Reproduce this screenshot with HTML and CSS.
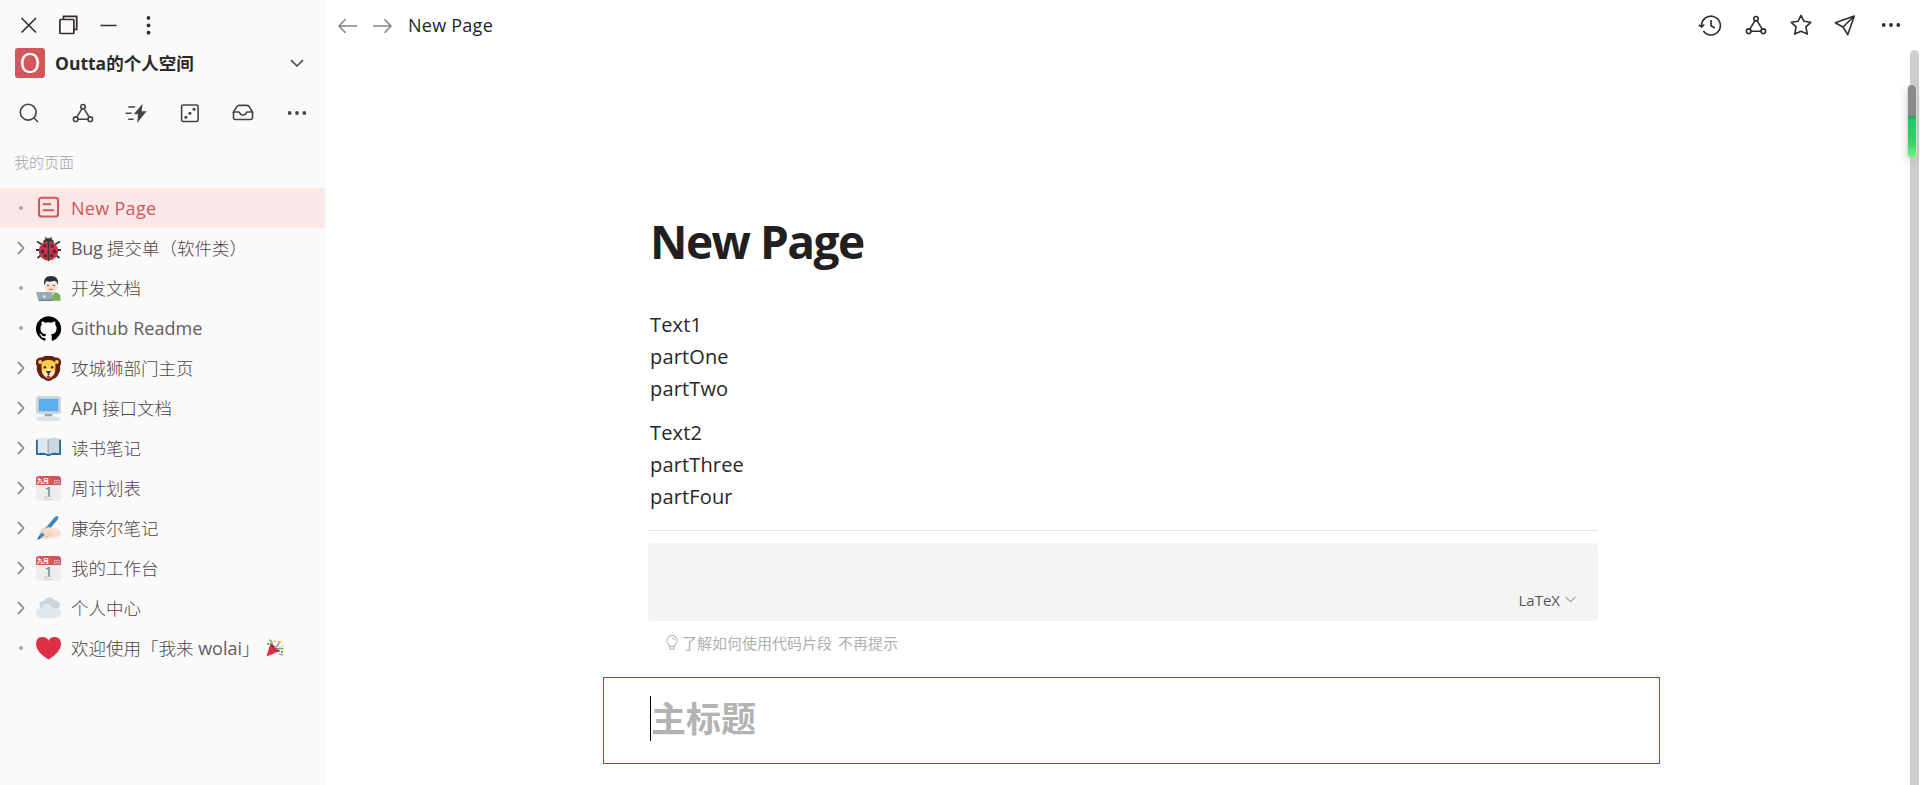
FILE: index.html
```html
<!DOCTYPE html>
<html lang="zh-CN">
<head>
<meta charset="utf-8">
<title>New Page</title>
<link rel="stylesheet" href="styles.css">
</head>
<body>
<svg class="defs" width="0" height="0">
  <defs>
    <symbol id="graph" viewBox="0 0 22 22"><g fill="none" stroke="currentColor" stroke-width="1.6"><circle cx="11" cy="4.7" r="2.2"/><circle cx="3.7" cy="17.2" r="2.3"/><circle cx="18.3" cy="17.2" r="2.3"/><path d="M10 6.7 4.8 15.2M12 6.7l5.2 8.5M6 17.2h10"/></g></symbol>
    <symbol id="more" viewBox="0 0 22 22"><g fill="currentColor"><circle cx="3.7" cy="11" r="1.9"/><circle cx="11" cy="11" r="1.9"/><circle cx="18.3" cy="11" r="1.9"/></g></symbol>
    <symbol id="caret" viewBox="0 0 8 14"><path d="M1 1 6.600 7 1 13" fill="none" stroke="currentColor" stroke-width="1.7"/></symbol>
    <symbol id="calendar" viewBox="0 0 25 25"><rect width="25" height="25" rx="3" fill="#ededed"/><path d="M0 9V3a3 3 0 0 1 3-3h19a3 3 0 0 1 3 3v6z" fill="#d1575b"/><g fill="#f6d5d6"><path d="M18 4h1.3v1.2H18zM20.3 4h1.3v1.2h-1.3zM22.6 4h1.2v1.2h-1.2zM18 6.3h1.3v1.2H18zM20.3 6.3h1.3v1.2h-1.3zM22.6 6.3h1.2v1.2h-1.2z"/></g><text x="1" y="7.400" class="cal-month">九月</text><text x="8.200" y="20.600" class="cal-day">1</text><text x="7.8" y="23.800" class="cal-week">周三</text></symbol>
  </defs>
</svg>
<div class="app">
  <aside class="sidebar">
    <div class="window-bar">
      <svg width="19" height="20" viewBox="0 0 19 20"><path d="m2.5 3 14.500 14.500m0-14.500L2.500 17.500" fill="none" stroke="currentColor" stroke-width="1.6"/></svg>
      <svg width="19" height="20" viewBox="0 0 19 20"><g fill="none" stroke="currentColor" stroke-width="1.7"><rect x=".9" y="4.500" width="14" height="14" rx=".8"/><path d="M4.500 4.500V1.300h13.200v13.200h-3"/></g></svg>
      <svg width="17" height="20" viewBox="0 0 17 20"><path d="M.5 10.500h16" stroke="currentColor" stroke-width="1.500"/></svg>
      <svg width="5" height="20" viewBox="0 0 5 20"><g fill="currentColor"><circle cx="2.500" cy="2.900" r="1.900"/><circle cx="2.500" cy="10.400" r="1.900"/><circle cx="2.500" cy="17.700" r="1.900"/></g></svg>
    </div>
    <div class="workspace">
      <span class="avatar">O</span>
      <span class="workspace-name">Outta的个人空间</span>
      <svg class="workspace-arrow" width="14" height="9" viewBox="0 0 14 9"><path d="m1 1.200 6 5.800 6-5.800" fill="none" stroke="currentColor" stroke-width="1.600"/></svg>
    </div>
    <nav class="tools">
      <svg viewBox="0 0 22 22"><g fill="none" stroke="currentColor" stroke-width="1.600"><circle cx="10.200" cy="10.200" r="7.900"/><path d="m15.800 15.800 4.200 4.200"/></g></svg>
      <svg viewBox="0 0 22 22"><use href="#graph"/></svg>
      <svg viewBox="0 0 22 22"><path d="M3.200 5h7M.600 11.200h6M3.200 17.200h5.400" stroke="currentColor" stroke-width="1.500"/><path d="M17.500 1.700 8.800 12.200h4.200l-.800 8.800 9.300-11.700h-4.800z" fill="currentColor"/></svg>
      <svg viewBox="0 0 22 22"><rect x="2.600" y="3" width="16.500" height="16.500" rx="1.600" fill="none" stroke="currentColor" stroke-width="1.600"/><g fill="currentColor"><circle cx="15" cy="7.200" r="1.500"/><circle cx="10.900" cy="11.200" r="1.500"/><circle cx="6.900" cy="15.300" r="1.500"/></g></svg>
      <svg viewBox="0 0 22 22"><path d="M1.500 10v5.500a2 2 0 0 0 2 2h15a2 2 0 0 0 2-2V10M1.500 10l3.300-5.400Q5.500 3.400 7 3.400h8q1.500 0 2.200 1.200L20.500 10h-5q-.800 0-1.100.800-.700 2.200-3.400 2.200t-3.400-2.200q-.300-.8-1.100-.8z" fill="none" stroke="currentColor" stroke-width="1.600"/></svg>
      <svg viewBox="0 0 22 22"><use href="#more"/></svg>
    </nav>
    <div class="section-label">我的页面</div>
    <ul class="pages">
      <li class="page active"><span class="lead"><i class="dot"></i></span>
        <svg class="icon" viewBox="0 0 25 25"><g fill="none" stroke="currentColor" stroke-width="2.100"><rect x="3" y="1.800" width="19" height="18.700" rx="2.500"/><path d="M6.800 8.200h8.200M6.800 14.200h11.400" stroke-width="1.900"/></g></svg><span class="name"><span class="lat first">New Page</span></span></li>
      <li class="page"><span class="lead"><svg width="8" height="14"><use href="#caret"/></svg></span>
        <svg class="icon" viewBox="0 0 25 25"><path d="m1 5.500 5 3M24 5.500l-5 3M0 14h25M1.500 22l5-4M23.500 22l-5-4" stroke="#31373d" stroke-width="1.800"/><path d="M7 7q0-3 2.500-4L9 .500l2.200 1.800h2.600L16 .500 15.500 3Q18 4 18 7z" fill="#31373d"/><ellipse cx="12.500" cy="14.800" rx="9.700" ry="9.700" fill="#d92b45"/><path d="M12.500 5v20" stroke="#31373d" stroke-width="1.500"/><g fill="#31373d"><circle cx="8.800" cy="10" r="1.700"/><circle cx="16.200" cy="10" r="1.700"/><circle cx="6.500" cy="15.500" r="2"/><circle cx="18.500" cy="15.500" r="2"/><circle cx="9.300" cy="19.800" r="1.700"/><circle cx="15.700" cy="19.800" r="1.700"/></g></svg><span class="name"><span class="lat bug">Bug </span>提交单（软件类）</span></li>
      <li class="page"><span class="lead"><i class="dot"></i></span>
        <svg class="icon" viewBox="0 0 25 25"><path d="M9 24v-4q0-3.500 4-3.500h6q5.500 0 5.500 5.500v3z" fill="#77b255"/><path d="M12 14h6v4.500q-3 2-6 0z" fill="#e9c5b5"/><path d="M8.500 7h13v3q-.5 6-6.500 6.500Q9 16 8.500 10z" fill="#f7dece"/><path d="M8 9Q7 0 15 0t7 9l-1.500-3-2-1.300Q13 6.500 10.500 5z" fill="#292f33"/><circle cx="12" cy="9.500" r=".8" fill="#662113"/><circle cx="18" cy="9.500" r=".8" fill="#662113"/><path d="M13 13q2 1.300 4 0" fill="none" stroke="#c1694f"/><path d="M0 16h15.500l1.700 9H2.500z" fill="#99aab5"/><path d="M3 25h14v-1.200H3z" fill="#667984"/><circle cx="8.300" cy="20.500" r="1.500" fill="#e1e8ed"/></svg><span class="name">开发文档</span></li>
      <li class="page"><span class="lead"><i class="dot"></i></span>
        <svg class="icon github" viewBox="0 0 24 24"><path fill="#000" d="M12 .3A12 12 0 0 0 8.200 23.700c.6.100.8-.3.800-.6v-2c-3.300.7-4-1.600-4-1.600-.6-1.400-1.400-1.800-1.400-1.800-1-.7.100-.7.100-.7 1.200 0 1.900 1.200 1.900 1.200 1 1.800 2.800 1.300 3.500 1 0-.8.400-1.300.7-1.600-2.700-.3-5.500-1.300-5.500-6 0-1.200.5-2.300 1.300-3.100-.2-.4-.6-1.600 0-3.200 0 0 1-.3 3.400 1.200a11.500 11.500 0 0 1 6 0c2.300-1.500 3.300-1.200 3.300-1.200.6 1.600.2 2.800.1 3.200.8.800 1.300 1.900 1.300 3.200 0 4.600-2.800 5.600-5.500 5.900.5.400.9 1 .9 2.200v3.300c0 .3.100.7.800.6A12 12 0 0 0 12 .3"/></svg><span class="name"><span class="lat readme">Github Readme</span></span></li>
      <li class="page"><span class="lead"><svg width="8" height="14"><use href="#caret"/></svg></span>
        <svg class="icon" viewBox="0 0 25 25"><path d="M12.500 0q4-.500 6.500 1.500Q24 1 25 5q.5 3-1 5 1 4-1 7-1.500 5-6 6-2 2-4.500 2T8 23q-4.500-1-6-6-2-3-1-7-1.500-2-1-5 1-4 6-3.500Q8.500-.500 12.500 0z" fill="#662113"/><circle cx="4.200" cy="6" r="2" fill="#ffcc4d"/><circle cx="20.800" cy="6" r="2" fill="#ffcc4d"/><path d="M5.500 8q1-4 7-4t7 4l-.3 7q-1 5-6.700 7-5.700-2-6.700-7z" fill="#ffcc4d"/><path d="m12.500 12 3 3 3.500-.5q0 5.500-6.500 8.500Q6 20 6 14.500l3.500.5z" fill="#ffe8b6"/><circle cx="8.900" cy="11.300" r="1.200" fill="#292f33"/><circle cx="16.100" cy="11.300" r="1.200" fill="#292f33"/><path d="M9.700 15h5.600l-2 2.500v2h-1.600v-2z" fill="#292f33"/><path d="M10.500 20h4q-.5 3-2 3t-2-3z" fill="#dd2e44"/></svg><span class="name">攻城狮部门主页</span></li>
      <li class="page"><span class="lead"><svg width="8" height="14"><use href="#caret"/></svg></span>
        <svg class="icon" viewBox="0 0 25 25"><rect width="25" height="18" rx="2.500" fill="#ccd6dd"/><rect x="2.800" y="2.800" width="19.500" height="12.500" fill="#5dadec"/><path d="M9 18h7l1 2.500H8z" fill="#9aaab4"/><rect x="0" y="20.800" width="25" height="4.200" rx="2" fill="#e1e8ed"/><path d="M2 22.200h21M3 23.800h19" stroke="#ccd6dd" stroke-width=".8" stroke-dasharray="1 1"/></svg><span class="name"><span class="lat api">API </span>接口文档</span></li>
      <li class="page"><span class="lead"><svg width="8" height="14"><use href="#caret"/></svg></span>
        <svg class="icon" viewBox="0 0 25 25"><path d="M0 4.500q0-1 1-1h23q1 0 1 1V18q0 1-1 1h-9l-1 1h-3l-1-1H1q-1 0-1-1z" fill="#226699"/><path d="M1.800 3Q8 0 12.500 3v15.500Q7 15.500 1.800 17.500z" fill="#e1e8ed"/><path d="M23.200 3Q17 0 12.500 3v15.500q5.500-3 10.700-1z" fill="#ccd6dd"/><path d="M12 3v15" stroke="#99aab5"/></svg><span class="name">读书笔记</span></li>
      <li class="page"><span class="lead"><svg width="8" height="14"><use href="#caret"/></svg></span>
        <svg class="icon" viewBox="0 0 25 25"><use href="#calendar"/></svg><span class="name">周计划表</span></li>
      <li class="page"><span class="lead"><svg width="8" height="14"><use href="#caret"/></svg></span>
        <svg class="icon" viewBox="0 0 25 25"><path d="M3 19q.500-8 7-8 4-.500 7.500 1 6 .800 7.500 4 .300 4-5 5.500l-8 1.200q-2.500 2-3.500.300L5.500 22z" fill="#f7dece"/><path d="M10 18q3-3 5 0M9 21q4-1 6-3" fill="none" stroke="#e0aa94" stroke-width=".8"/><path d="m19 .800 2.200-.8 1.300.8-.8 2.900L6 21.500l-3-1.800z" fill="#3b88c3"/><path d="m3 19.700 3 1.800-5 2.700z" fill="#226699"/><path d="M6 17.500q1-5 7-6.500l3 1.500q-1 4-6.500 5.500z" fill="#f7dece"/></svg><span class="name">康奈尔笔记</span></li>
      <li class="page"><span class="lead"><svg width="8" height="14"><use href="#caret"/></svg></span>
        <svg class="icon" viewBox="0 0 25 25"><use href="#calendar"/></svg><span class="name">我的工作台</span></li>
      <li class="page"><span class="lead"><svg width="8" height="14"><use href="#caret"/></svg></span>
        <svg class="icon" viewBox="0 0 25 25"><g fill="#ccd6dd"><circle cx="7.500" cy="9" r="4.200"/><circle cx="13.500" cy="6" r="4.800"/><circle cx="19.500" cy="9" r="4.500"/><rect x="6" y="7" width="15" height="7"/></g><g fill="#e1e8ed"><circle cx="5" cy="17" r="5"/><circle cx="11" cy="13" r="5.300"/><circle cx="20" cy="17" r="5"/><circle cx="16" cy="16" r="4.500"/><rect x="4" y="16" width="17" height="6"/></g></svg><span class="name">个人中心</span></li>
      <li class="page"><span class="lead"><i class="dot"></i></span>
        <svg class="icon" viewBox="0 0 25 25"><path d="M12.500 23.500Q0 16 0 8q0-6.700 6.500-6.900 4.500 0 6 3.600 1.500-3.600 6-3.600Q25 1.300 25 8q0 8-12.500 15.500z" fill="#dd2e44"/></svg><span class="name">欢迎使用「我来<span class="lat wolai"> wolai</span>」</span><svg class="party" viewBox="0 0 18 18"><path d="M4.500 4 .5 17.500 14 12z" fill="#dd2e44"/><path d="M4.500 4 14 12q-2 2-6-2T4.500 4z" fill="#992037"/><path d="M3 1q4 1 3 5M10 11q3-3 7.500-1" fill="none" stroke="#77b255" stroke-width="1.500"/><path d="M8 9q5-2 5-7M13 15l4 1" fill="none" stroke="#aa8dd8" stroke-width="1.600"/><g fill="#ffcc4d"><circle cx="14.500" cy="3" r="1.300"/><circle cx="9" cy="2" r="1"/><circle cx="17" cy="7" r=".9"/></g><path d="M1 4h2v2H1zM15 12h2v2h-2z" fill="#77b255"/></svg></li>
    </ul>
  </aside>
  <main class="main">
    <header class="topbar">
      <svg class="nav-arrow" width="19" height="16" viewBox="0 0 19 16"><path d="M19 8H1m6.500-6.800L1 8l6.500 6.800" fill="none" stroke="currentColor" stroke-width="1.600"/></svg>
      <svg class="nav-arrow" width="19" height="16" viewBox="0 0 19 16"><path d="M0 8h18m-6.500-6.800L18 8l-6.500 6.800" fill="none" stroke="currentColor" stroke-width="1.600"/></svg>
      <span class="crumb">New Page</span>
      <div class="actions">
        <svg viewBox="0 0 24 24"><g fill="none" stroke="currentColor" stroke-width="1.600"><path d="M3.600 13.500a9.400 9.400 0 1 1 1.700 4.500M13 7v5.800l3.800 2.200M.8 11.800l2.700 2.100 2.900-2.400"/></g></svg>
        <svg viewBox="0 0 22 22"><use href="#graph"/></svg>
        <svg viewBox="0 0 22 22"><path d="m11 1.300 3 6 6.700 1-4.800 4.600 1.400 7.200-6.300-2.800-6.300 2.800 1.400-7.200L1.300 8.300 8 7.300z" fill="none" stroke="currentColor" stroke-width="1.600" stroke-linejoin="round"/></svg>
        <svg viewBox="0 0 22 22"><path d="M20.300 2 1.300 8.800l7.700 4.200L20.300 2 13.700 20.700 9 13" fill="none" stroke="currentColor" stroke-width="1.600" stroke-linejoin="round"/></svg>
        <svg viewBox="0 0 22 22"><use href="#more"/></svg>
      </div>
    </header>
    <article class="doc">
      <h1 class="doc-title">New Page</h1>
      <div class="block"><p>Text1</p><p>partOne</p><p>partTwo</p></div>
      <div class="block"><p>Text2</p><p>partThree</p><p>partFour</p></div>
      <hr class="rule">
      <div class="code"><span class="code-lang">LaTeX</span><svg width="11" height="7" viewBox="0 0 11 7"><path d="m.6.800 4.900 4.900L10.400.800" fill="none" stroke="currentColor" stroke-width="1.200"/></svg></div>
      <div class="hint"><svg width="12" height="16" viewBox="0 0 12 16"><g fill="none" stroke="currentColor" stroke-width="1.100"><path d="M3.800 11.500Q3.700 10 2.300 8.800A5 5 0 1 1 9.700 8.800Q8.300 10 8.200 11.500zM3.900 11.500v2.700h4.200v-2.700M6 3q2 0 2.400 2"/></g></svg><span>了解如何使用代码片段</span><span class="dismiss">不再提示</span></div>
      <div class="heading-box"><i class="cursor"></i><span class="placeholder">主标题</span></div>
    </article>
    <div class="scrollbar"><div class="meter"></div></div>
  </main>
</div>
</body>
</html>
```
FILE: styles.css
```css
* { box-sizing: border-box; }
body {
  margin: 0;
  height: 785px;
  overflow: hidden;
  background: #fff;
  color: #231f20;
  font-family: "Open Sans", "Noto Sans CJK SC", sans-serif;
}
svg { display: block; flex: none; }
.defs { position: absolute; }
.app { display: flex; height: 785px; }

/* Sidebar */
.sidebar { flex: none; width: 326px; background: #fafafa; color: #4a4647; }
.window-bar {
  display: flex;
  align-items: center;
  height: 48px;
  padding: 2px 0 0 19px;
  color: #332b2c;
}
.window-bar svg { margin: 0 21px 1px 0; }
.window-bar svg:nth-child(2) { margin-right: 22px; }
.window-bar svg:nth-child(3) { margin-right: 29px; }
.workspace { display: flex; align-items: center; height: 30px; padding: 0 22px 0 15px; }
.avatar {
  width: 30px;
  height: 30px;
  border-radius: 3px;
  background: #d1575b;
  color: #fff;
  font-size: 27px;
  line-height: 29px;
  text-align: center;
}
.workspace-name {
  margin-left: 10px;
  color: #2d2a2b;
  font-size: 17.5px;
  font-weight: 700;
  line-height: 30px;
  white-space: nowrap;
}
.workspace-arrow { margin-left: auto; color: #4a4647; }
.tools {
  display: flex;
  justify-content: space-between;
  padding: 24px 18px 0;
  color: #444;
}
.tools svg { width: 22px; height: 22px; }
.section-label {
  margin: 26px 0 0 14px;
  color: #aaa19f;
  font-size: 15px;
  font-weight: 300;
  line-height: 24px;
}
.pages { margin: 14px 0 0; padding: 0; list-style: none; }
.page { display: flex; align-items: center; height: 40px; color: #4f4546; }
.active { margin-right: 1px; background: #fae7e8; color: #d1575b; }
.lead { display: flex; flex: none; width: 36px; padding-left: 17px; color: #8b8182; }
.dot { width: 4px; height: 4px; margin-left: 2px; border-radius: 50%; background: #b1a9a9; }
.icon { width: 25px; height: 25px; }
.name {
  margin-left: 10px;
  font-size: 17.5px;
  font-weight: 300;
  line-height: 39px;
  white-space: pre;
}
.lat { color: #655b5c; font-size: 18px; font-weight: 400; }
.first { color: #d1575b; letter-spacing: .3px; }
.bug { letter-spacing: -.3px; }
.api { letter-spacing: -.2px; }
.readme { letter-spacing: .05px; }
.party { width: 18px; height: 18px; margin-left: 6px; }
.cal-month { fill: #fff; font: 700 6px "Noto Sans CJK SC", sans-serif; }
.cal-day { fill: #66757f; font: 400 15px "Open Sans", sans-serif; }
.cal-week { fill: #b5bdc2; font: 400 4px "Noto Sans CJK SC", sans-serif; }

/* Page */
.main { position: relative; flex: 1; }
.topbar { display: flex; align-items: center; height: 51px; padding: 0 18px 0 12px; }
.nav-arrow { margin-right: 16px; color: #8b8182; }
.crumb { height: 51px; font-size: 18px; line-height: 51px; letter-spacing: .25px; }
.actions { display: flex; gap: 22.7px; margin-left: auto; color: #332b2c; }
.actions svg { width: 22px; height: 22px; }
.actions svg:first-child { width: 24px; height: 24px; margin-top: -1px; }
.actions svg:nth-child(4) { margin-right: 1px; }
.doc { width: 950px; margin-left: 322px; padding-top: 156px; }
.doc-title {
  margin: 0 0 50px 2px;
  font-size: 46px;
  font-weight: 700;
  line-height: 68px;
  letter-spacing: -1.5px;
}
.block { margin: -17px 0 29px 2px; }
.doc-title + .block { margin-top: -16px; }
.block p {
  margin: 0;
  color: #24272b;
  font-size: 20px;
  line-height: 32px;
  letter-spacing: .15px;
}
.rule { height: 1px; margin: -12px 0 12px; border: 0; background: #e5e5e5; }
.code {
  display: flex;
  align-items: center;
  justify-content: flex-end;
  height: 78px;
  padding: 35px 22px 0 0;
  border-radius: 4px;
  background: #f4f4f4;
  color: #a7a0a1;
}
.code-lang { margin-right: 5px; color: #5c5354; font-size: 15px; }
.hint {
  display: flex;
  align-items: center;
  height: 44px;
  padding: 0 0 1px 18px;
  color: #b0b0b0;
  font-size: 15px;
}
.hint svg { margin-right: 4px; }
.dismiss { margin-left: 6px; }
.heading-box {
  display: flex;
  align-items: center;
  width: 1057px;
  height: 87px;
  margin: 12px 0 0 -45px;
  padding: 0 0 4px 46px;
  border: 1px solid #e0242b;
}
.cursor { width: 1px; height: 45px; background: #000; }
.placeholder { color: #b3b3b3; font-size: 35px; font-weight: 700; line-height: 45px; }
.scrollbar {
  position: absolute;
  top: 50px;
  right: 1px;
  bottom: 0;
  width: 9px;
  border-radius: 5px 5px 0 0;
  background: #cfcecd;
}
.meter {
  position: absolute;
  top: 34px;
  left: -3px;
  width: 10px;
  height: 75px;
  border: 1px solid #d9d9d9;
  border-radius: 5px;
  background: linear-gradient(#8b898a 0 31px, #1fae5e 31px 34px, #22c768 34px, #2fd169 56px, #74f57a 73px);
  box-shadow: -1px 3px 8px rgba(0, 0, 0, .15);
}
```
